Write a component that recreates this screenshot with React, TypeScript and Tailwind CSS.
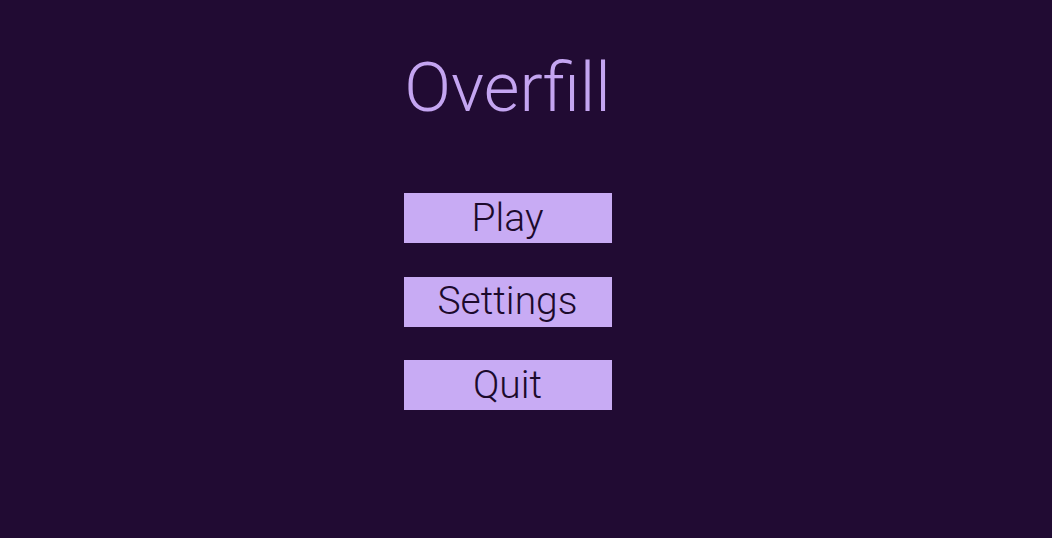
import React from 'react';

const items = ['Play', 'Settings', 'Quit'];

function MenuButton({ label }: { label: string }) {
  return (
    <button className="flex h-[50px] w-[208px] items-center justify-center bg-[#c8abf4] text-[39px] font-light leading-none text-[#1c0a2c]">
      {label}
    </button>
  );
}

export default function App() {
  return (
    <div
      className="flex h-[538px] w-full flex-col items-center bg-[#210b33] pr-[37px]"
      style={{ fontFamily: 'Roboto, "Noto Sans", sans-serif' }}
    >
      <h1 className="mt-[53px] text-[69px] font-light leading-none text-[#c4a5f1]">Overfill</h1>
      <div className="mt-[71px] flex flex-col gap-[33.5px]">
        {items.map((label) => (
          <MenuButton key={label} label={label} />
        ))}
      </div>
    </div>
  );
}
